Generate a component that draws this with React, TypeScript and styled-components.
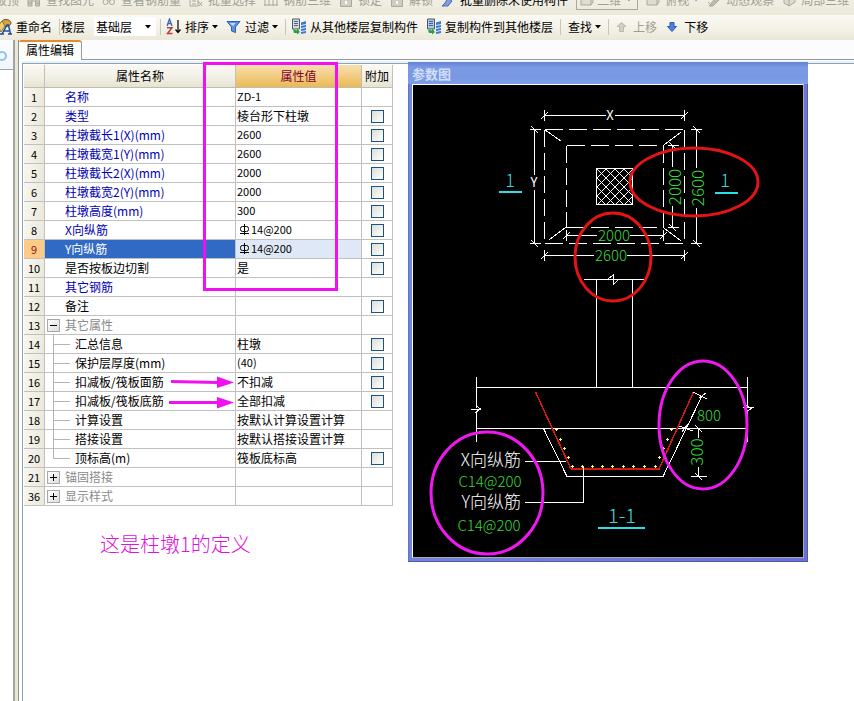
import React, { useState } from "react";
import styled, { createGlobalStyle, css } from "styled-components";

const cjk = '"Noto Sans CJK SC", "Liberation Sans", sans-serif';

const GlobalStyle = createGlobalStyle`
  * { box-sizing: border-box; }
  body { margin: 0; background: #fff; color: #000; font: 12px/18px ${cjk}; }
  button, select, input { font: inherit; color: inherit; margin: 0; }
  svg { display: block; flex: none; }
`;

const Page = styled.div`
  min-height: 100vh;
  display: flex;
  flex-direction: column;
  overflow: hidden;
`;

/* ---------- toolbars ---------- */

const ViewBar = styled.div`
  height: 15px;
  overflow: hidden;
  display: flex;
  align-items: flex-end;
  padding-bottom: 6px;
  background: linear-gradient(#f1efe4, #ebe8d9);
`;

const ViewTools = styled.div`
  display: flex;
  align-items: center;
  gap: 8px;
  height: 18px;
  margin-left: -5px;
  white-space: nowrap;
`;

const EditBar = styled.div`
  height: 25px;
  display: flex;
  align-items: center;
  margin-left: -8px;
  padding-bottom: 2px;
  white-space: nowrap;
  background: linear-gradient(#faf9f3, #f4f2e8 50%, #ebe8d9);
`;

const Tool = styled.button<{ $dim?: boolean; $flush?: boolean }>`
  display: flex;
  align-items: center;
  gap: ${(p) => (p.$flush ? 5 : 4)}px;
  flex: none;
  border: 0;
  padding: ${(p) => (p.$flush ? "0" : "0 4px")};
  background: none;
  color: ${(p) => (p.$dim ? "#a19f93" : "#000")};
`;

const ToolGroup = styled.div`
  display: flex;
  align-items: center;
  padding-left: 2px;
`;

const Separator = styled.span`
  flex: none;
  width: 1px;
  height: 16px;
  margin: 0 1px 0 3px;
  background: #c9c6b6;
`;

const FloorLabel = styled.label`
  flex: none;
  padding-right: 9px;
`;

const Combo = styled.span<{ $dim?: boolean }>`
  display: grid;
  grid-template-columns: 1fr 14px;
  align-items: center;
  flex: none;
  width: 62px;
  height: ${(p) => (p.$dim ? 20 : 19)}px;
  margin-right: ${(p) => (p.$dim ? 0 : 1)}px;
  background: ${(p) => (p.$dim ? "none" : "#fff")};
  border: ${(p) => (p.$dim ? "1px solid #aaa99c" : "0")};
  color: ${(p) => (p.$dim ? "#a19f93" : "#000")};
  select {
    grid-area: 1 / 1 / 2 / 3;
    appearance: none;
    border: 0;
    outline: 0;
    background: none;
    height: 18px;
    padding: 0 0 0 ${(p) => (p.$dim ? 20 : 2)}px;
  }
  svg { grid-area: 1 / 2; pointer-events: none; margin-left: 3px; }
  svg:nth-of-type(2) { grid-area: 1 / 1; }
`;

const Caret = () => (
  <svg width="6" height="4" viewBox="0 0 6 4"><path d="M0 0h6L3 3.4z" fill="currentColor" /></svg>
);
const ToolCaret = styled.span`
  margin-left: -1px;
`;

const dimInk = "#aaa89c";
type DimKind = "find" | "glasses" | "batch" | "bars" | "lock" | "brush" | "box" | "orbit" | "cube";
const DimIcon = ({ kind }: { kind: DimKind }) => (
  <svg width="14" height="14" viewBox="0 0 14 14" fill="none" stroke={dimInk}>
    {kind === "find" && <path d="M1 13V6h4v7zM8.500 13V6h4v7zM5 8h3M1 10h4M8 10h5" fill="#c8c6ba" />}
    {kind === "glasses" && <><circle cx="3.500" cy="9" r="2.500" /><circle cx="10" cy="9" r="2.500" /><path d="M6 8h2M2 6l2-4M12 6l-1-4" /></>}
    {kind === "batch" && <path d="M1 2v11h8V2zM3 5h4M3 8h4M3 11h4M9 8l4 5M10 13l3-4" />}
    {kind === "bars" && <path d="M1 1v12M5 1v12M9 1v12M13 1v12M0 12h14M0 4h14" />}
    {kind === "lock" && <><path d="M1.500 5.500h11v8h-11z" fill="#cfcdc1" /><path d="M4 5V1h6v4" /><path d="M7 8v3" stroke="#fff" strokeWidth="2" /></>}
    {kind === "brush" && <><path d="M12 2L7 7" stroke="#38507c" strokeWidth="2" /><path d="M7 5l4 3-4 5H1l3-3z" fill="#7f9fe0" stroke="#4668b4" /></>}
    {kind === "box" && <path d="M1 5h10v7H1zM1 5l3-4h9v8l-2 3M11 5l2-4" fill="#deddd2" />}
    {kind === "orbit" && <path d="M2 13L11 2l2 4-7 7zM1 9l4 4" fill="#bdbbb0" />}
    {kind === "cube" && <path d="M2 4l5-3 6 3v5l-6 4-5-3zM2 4l5 3 6-3M7 7v6" fill="#dddcd1" />}
  </svg>
);

const RenameIcon = () => (
  <svg width="16" height="18" viewBox="0 0 16 18">
    <ellipse cx="10" cy="5" rx="5" ry="3.500" fill="#d9a53a" stroke="#6b5424" />
    <path d="M2 8l4-5 3 5-4 6z" fill="#f1ce74" stroke="#8b713b" />
    <path d="M6 16l5-9h1.500l2 9M7 13h6M4 16h4M12 16h4" fill="none" stroke="#1f4d9c" strokeWidth="1.500" />
  </svg>
);
const SortIcon = () => (
  <svg width="15" height="17" viewBox="0 0 15 17" fill="none">
    <path d="M1 8l2.500-7L6 8M2 5.500h3" stroke="#3566b8" strokeWidth="1.300" />
    <path d="M1 9.700h5L1.500 15.500H6.500" stroke="#b6403c" strokeWidth="1.500" />
    <path d="M12 2v12M9.500 11.500L12 14.500l2.500-3" stroke="#000" strokeWidth="1.200" />
  </svg>
);
const FilterIcon = () => (
  <svg width="15" height="14" viewBox="0 0 15 14">
    <path d="M1 1.500h13L9.500 7v5.500l-4-1.500V7z" fill="#5b93e2" stroke="#2b60b5" />
    <path d="M3.500 3h6L7 6z" fill="#c4dcff" />
  </svg>
);
const CopyIcon = ({ tint }: { tint: string }) => (
  <svg width="15" height="17" viewBox="0 0 15 17">
    <path d="M1.500 1h7v10h-7z" fill={tint} stroke="#535b62" />
    <path d="M3 3.500h4M3 5.500h4M3 7.500h4" stroke="#4a648d" />
    <path d="M10 4.500l5-1.500v12l-5 1z" fill="#3d78c9" />
    <path d="M10 7.500l5-1M10 10.500l5-1M10 13.500l5-1" stroke="#d9e9ff" />
    <path d="M2 11.500l4 1v-2l3 3.500-3 2.500v-1.500H3z" fill="#29a03e" />
  </svg>
);
const MoveIcon = ({ down }: { down?: boolean }) => (
  <svg width="15" height="12" viewBox="0 0 15 12">
    {down
      ? <path d="M5 1.500h4v4h2.500L7 10.500 2.500 5.500H5z" fill="#4d82e0" stroke="#2c55b0" />
      : <path d="M5.500 10.500h4v-5H12L7.500 1.500 3 5.500h2.500z" fill="#d0cec6" stroke="#bbb9b0" />}
  </svg>
);

/* ---------- workspace ---------- */

const Workspace = styled.div`
  flex: 1;
  display: flex;
  background: #fff;
`;

const SideStrip = styled.aside`
  flex: none;
  width: 13px;
  overflow: hidden;
`;
const SideTab = styled.div`
  height: 30px;
  padding-top: 8px;
  margin-left: -8px;
  background: linear-gradient(#fbfcff, #f0f6fd);
  border-bottom: 1px solid #98a6b4;
`;
const Splitter = styled.div`
  flex: none;
  width: 6px;
  background: #e9e7da;
  border-left: 2px solid #a3a49c;
  border-right: 1px solid #8c958f;
`;

const Main = styled.main`
  flex: 1;
  min-width: 0;
  display: flex;
  flex-direction: column;
`;
const TabStrip = styled.div`
  height: 20px;
  display: flex;
  background: #fcfcfe;
  border-bottom: 1px solid #919b9c;
`;
const Tab = styled.button`
  height: 20px;
  width: 63px;
  padding: 0 0 2px;
  line-height: 16px;
  background: #fcfcf9;
  border: solid #919b9c;
  border-width: 2px 1px 0 0;
  border-top-color: #e68b2c;
  border-radius: 2px 3px 0 0;
`;
const Panel = styled.section`
  flex: 1;
  display: flex;
  align-items: flex-start;
  gap: 15px;
  margin: 3px 0 0 3px;
  padding: 1px 0 0 1px;
  border-top: 1px solid #8ba3b8;
  border-left: 1px solid #8ba3b8;
  box-shadow: 0 -2px 0 #e8f2fb;
`;

/* ---------- property grid ---------- */

const GridArea = styled.div`
  position: relative;
  flex: none;
`;
const Grid = styled.table`
  table-layout: fixed;
  width: 369px;
  border-collapse: separate;
  border-spacing: 0;
`;
const headFill = "linear-gradient(#f9f8f2, #f2f0e5 60%, #e6e3d2)";
const HeadCell = styled.th<{ $active?: boolean }>`
  height: 23px;
  padding: 0;
  font-weight: 400;
  border-right: 1px solid #c4c1b2;
  border-bottom: 1px solid #c0bdae;
  background: ${(p) => (p.$active ? "linear-gradient(#f6dfae, #f2cd83 50%, #eab955)" : headFill)};
  color: ${(p) => (p.$active ? "#800030" : "#000")};
`;
const cell = css`
  height: 19px;
  padding: 0;
  border-right: 1px solid #c0c0c0;
  border-bottom: 1px solid #c0c0c0;
`;
const NumberCell = styled.th<{ $active?: boolean }>`
  ${cell}
  font-size: 11px;
  line-height: 18px;
  font-weight: 400;
  text-align: center;
  background: ${(p) => (p.$active ? "#fbcb87" : "linear-gradient(100deg, #f8f7f1, #ebe8da)")};
  color: ${(p) => (p.$active ? "#8a1010" : "#000")};
`;
const tones = { blue: "#0000b4", black: "#000", gray: "#8a8a8a" };
type Tone = keyof typeof tones;
const NameCell = styled.td<{ $tone: Tone; $active?: boolean }>`
  ${cell}
  color: ${(p) => (p.$active ? "#fff" : tones[p.$tone])};
  background: ${(p) => (p.$active ? "#316ac5" : "#fff")};
`;
const ValueCell = styled.td<{ $active?: boolean }>`
  ${cell}
  padding-left: 1px;
  background: ${(p) => (p.$active ? "#dfe8f6" : "#fff")};
`;
const CheckCell = styled.td`
  ${cell}
`;
const CellLine = styled.div<{ $indent?: number }>`
  display: flex;
  align-items: center;
  height: 18px;
  padding-left: ${(p) => p.$indent ?? 0}px;
  white-space: nowrap;
`;
const Figure = styled.span`
  font-size: 11px;
  line-height: 16px;
  padding-bottom: 2px;
`;
const Check = styled.input`
  display: block;
  appearance: none;
  width: 13px;
  height: 13px;
  && { margin: 1px auto 0 9px; }
  border: 1px solid #1c5180;
  background: linear-gradient(135deg, #dcdcd7, #fff);
  &:checked { background: #1c5180; }
`;
const Expander = styled.button`
  width: 13px;
  height: 13px;
  && { margin: 0 5px 0 2px; }
  padding: 2px;
  border: 1px solid #a8a8a8;
  background: linear-gradient(135deg, #fff, #ddd);
  color: #000;
`;
const Branch = styled.span<{ $last?: boolean }>`
  width: 17px;
  height: 19px;
  margin: 0 5px 0 8px;
  align-self: flex-start;
  background:
    linear-gradient(#b4b4b4, #b4b4b4) 0 9px / 17px 1px no-repeat,
    linear-gradient(#b4b4b4, #b4b4b4) 0 0 / 1px ${(p) => (p.$last ? "9px" : "19px")} no-repeat;
`;
const Annotation = styled.svg`
  position: absolute;
  left: 0;
  top: 0;
  overflow: visible;
  pointer-events: none;
`;
const Note = styled.p`
  margin: 26px 0 0 76px;
  font-size: 20px;
  line-height: 24px;
  font-weight: 300;
  color: #e010e0;
`;

const Rebar = () => (
  <svg width="14" height="12" viewBox="0 0 14 12" fill="none" stroke="#000" aria-label="HRB400">
    <rect x="3.500" y="2.500" width="8" height="5" rx="2" />
    <path d="M7.500 0v11M3 9.500h9" />
  </svg>
);

interface Row {
  n: number;
  name: string;
  tone: Tone;
  value?: string;
  rebar?: boolean;
  check?: boolean;
  kind?: "child" | "last" | "open" | "closed";
}
const rows: Row[] = [
  { n: 1, name: "名称", tone: "blue", value: "ZD-1" },
  { n: 2, name: "类型", tone: "blue", value: "棱台形下柱墩", check: true },
  { n: 3, name: "柱墩截长1(X)(mm)", tone: "blue", value: "2600", check: true },
  { n: 4, name: "柱墩截宽1(Y)(mm)", tone: "blue", value: "2600", check: true },
  { n: 5, name: "柱墩截长2(X)(mm)", tone: "blue", value: "2000", check: true },
  { n: 6, name: "柱墩截宽2(Y)(mm)", tone: "blue", value: "2000", check: true },
  { n: 7, name: "柱墩高度(mm)", tone: "blue", value: "300", check: true },
  { n: 8, name: "X向纵筋", tone: "blue", value: "14@200", rebar: true, check: true },
  { n: 9, name: "Y向纵筋", tone: "blue", value: "14@200", rebar: true, check: true },
  { n: 10, name: "是否按板边切割", tone: "black", value: "是", check: true },
  { n: 11, name: "其它钢筋", tone: "blue" },
  { n: 12, name: "备注", tone: "black", check: true },
  { n: 13, name: "其它属性", tone: "gray", kind: "open" },
  { n: 14, name: "汇总信息", tone: "black", value: "柱墩", check: true, kind: "child" },
  { n: 15, name: "保护层厚度(mm)", tone: "black", value: "(40)", check: true, kind: "child" },
  { n: 16, name: "扣减板/筏板面筋", tone: "black", value: "不扣减", check: true, kind: "child" },
  { n: 17, name: "扣减板/筏板底筋", tone: "black", value: "全部扣减", check: true, kind: "child" },
  { n: 18, name: "计算设置", tone: "black", value: "按默认计算设置计算", kind: "child" },
  { n: 19, name: "搭接设置", tone: "black", value: "按默认搭接设置计算", kind: "child" },
  { n: 20, name: "顶标高(m)", tone: "black", value: "筏板底标高", check: true, kind: "last" },
  { n: 21, name: "锚固搭接", tone: "gray", kind: "closed" },
  { n: 36, name: "显示样式", tone: "gray", kind: "closed" },
];

const isFigure = (s: string) => /^[\x20-\x7e]+$/.test(s);

const Column = styled.col<{ $width: number }>`
  width: ${(p) => p.$width}px;
`;

const PropertyGrid = () => {
  const [active, setActive] = useState(9);
  return (
    <Grid>
      <colgroup>
        <Column $width={21} /><Column $width={191} /><Column $width={126} /><Column $width={31} />
      </colgroup>
      <thead>
        <tr>
          <HeadCell />
          <HeadCell>属性名称</HeadCell>
          <HeadCell $active>属性值</HeadCell>
          <HeadCell>附加</HeadCell>
        </tr>
      </thead>
      <tbody>
        {rows.map((r) => {
          const on = r.n === active;
          const group = r.kind === "open" || r.kind === "closed";
          const child = r.kind === "child" || r.kind === "last";
          return (
            <tr key={r.n} onClick={() => setActive(r.n)}>
              <NumberCell scope="row" $active={on}>{r.n}</NumberCell>
              <NameCell $tone={r.tone} $active={on}>
                <CellLine $indent={r.kind ? 0 : 20}>
                  {group && (
                    <Expander aria-label={r.name}>
                      <svg width="7" height="7" viewBox="0 0 7 7" stroke="currentColor">
                        <path d={r.kind === "open" ? "M0 3.500h7" : "M0 3.500h7M3.500 0v7"} />
                      </svg>
                    </Expander>
                  )}
                  {child && <Branch $last={r.kind === "last"} />}
                  {r.name}
                </CellLine>
              </NameCell>
              <ValueCell $active={on}>
                <CellLine>
                  {r.rebar && <Rebar />}
                  {r.value && (isFigure(r.value) ? <Figure>{r.value}</Figure> : r.value)}
                </CellLine>
              </ValueCell>
              <CheckCell>{r.check && <Check type="checkbox" aria-label={`附加 ${r.name}`} />}</CheckCell>
            </tr>
          );
        })}
      </tbody>
    </Grid>
  );
};

/* ---------- parameter window ---------- */

const Window = styled.section`
  flex: 0 1 400px;
  min-width: 0;
  margin-top: -3px;
  padding: 0 4px 4px;
  background: linear-gradient(100deg, #7189dc, #727bd8 60%, #6d70d4);
  box-shadow: inset -1px -1px 0 #5357b4, inset 1px 0 0 #6272c8;
`;
const WindowTitle = styled.h2`
  height: 22px;
  margin: 0 -4px;
  padding: 3px 4px 0;
  font-size: 13px;
  line-height: 18px;
  font-weight: 700;
  color: #d2dffa;
  background: linear-gradient(#6580d4, #7b9ae4 25%, #7997e2 70%, #7da0ea);
`;
const Canvas = styled.div`
  border: 1px solid;
  border-color: #fff #a9a8b4 #a9a8b4 #fff;
  background: #000;
  svg { width: 100%; height: auto; }
`;
const DrawingText = styled.text<{ $size: number; $light?: boolean }>`
  font-family: ${cjk};
  font-size: ${(p) => p.$size}px;
  font-weight: ${(p) => (p.$light ? 300 : 400)};
  stroke: none;
`;

const dots = [
  [556, 429], [560, 439], [564, 448], [568, 457],
  [572, 466], [582, 466], [592, 466], [602, 466], [612, 466], [623, 466], [633, 466], [644, 466], [655, 466],
  [659, 457], [663, 448], [667, 439], [671, 429],
];

/* Plan view on top, section 1-1 of the pier base below it. */
const PierDrawing = () => (
  <svg viewBox="413 85 390 472" fill="none" stroke="#fff" shapeRendering="crispEdges">
    <defs>
      <pattern id="hatch" width="9" height="9" patternUnits="userSpaceOnUse" x="597" y="169">
        <path d="M0 0l9 9M9 0L0 9" stroke="#fff" strokeWidth="1.200" />
      </pattern>
    </defs>

    <path d="M544.500 115.500H606M615 115.500H684.500M544.500 110v11M684.500 110v11M541 119l7-7M681 119l7-7" />
    <path d="M534.500 129.500V175M534.500 190V243.500M530 129.500h11M530 243.500h11M531 126l7 7M531 240l7 7" />
    <path d="M544.500 129.500H684.500M544.500 243.500H684.500" strokeDasharray="18 6" />
    <path d="M544.500 129.500V243.500M684.500 129.500V243.500" strokeDasharray="17 6" />
    <path d="M566.500 145.500H663.500M566.500 227.500H663.500" strokeDasharray="18 6" />
    <path d="M566.500 145.500V227.500M663.500 145.500V227.500" strokeDasharray="17 5" />
    <path d="M545 130l16 11M549 240l17-13M664 145l17-13M664 228l17 13" />
    <rect x="596.500" y="168.500" width="36" height="36" fill="url(#hatch)" />

    <path d="M672.500 145.500V167M672.500 206V227.500M668 145.500h11M668 227.500h11M669 142l7 7M669 224l7 7" />
    <path d="M696.500 129.500V168M696.500 208V243.500M691 129.500h11M691 243.500h11M693 126l7 7M693 240l7 7" />
    <path d="M566.500 235.500H597M630 235.500H663.500M566.500 230v11M663.500 230v11M563 239l7-7M660 239l7-7" />
    <path d="M544.500 255.500H594M627 255.500H684.500M544.500 250v11M684.500 250v11M541 259l7-7M681 259l7-7" />

    <path d="M584 279.500h60M608 279l5-4v10l6-6M596.500 279.500V387M632.500 279.500V387" />

    <path d="M476.500 387.500H747.500M476.500 428.500H747.500" />
    <path d="M476.500 377V408M476.500 411V442M471 409.500h9l-5 3M476 406l5 3" />
    <path d="M747.500 377V406M747.500 410V442M743 407.500h10l-5 3M744 404l5 3" />
    <path d="M543.500 428.500L567 476.500H663L702 396" />
    <g stroke="#d81818" strokeWidth="1.500">
      <path d="M535.500 392L571 469M659 469L693.500 392" />
      <path d="M571 469H660" strokeWidth="2" />
    </g>
    <path d="M525 461.500H566M525 502.500H583.500V467" />
    <path d="M693 392l14 7M699 398l7-5M679 426l14 5M682 432l6-8" />
    <path d="M698.500 428.500V438M698.500 467V476.500M691 476.500h16M695 425l7 7M695 473l7 7" />
    <g stroke="#ffff60">
      {dots.map(([x, y]) => <path key={`${x}-${y}`} d={`M${x - 1} ${y + 0.5}h3M${x + 0.5} ${y - 1}v3`} />)}
    </g>
    <g stroke="#28e0e8" strokeWidth="2">
      <path d="M499 192H522M715 193H738M598 528H645" />
    </g>

    <g fill="#fff">
      <DrawingText $size={13} x="610" y="120" textAnchor="middle">X</DrawingText>
      <DrawingText $size={13} x="534" y="187" textAnchor="middle">Y</DrawingText>
      <DrawingText $size={17} $light x="521" y="466" textAnchor="end">X向纵筋</DrawingText>
      <DrawingText $size={17} $light x="521" y="508" textAnchor="end">Y向纵筋</DrawingText>
    </g>
    <g fill="#38dc38">
      <DrawingText $size={15} $light x="614" y="241" textAnchor="middle">2000</DrawingText>
      <DrawingText $size={15} $light x="611" y="261" textAnchor="middle">2600</DrawingText>
      <DrawingText $size={17} $light textAnchor="middle" transform="translate(681 187) rotate(-90)">2000</DrawingText>
      <DrawingText $size={17} $light textAnchor="middle" transform="translate(704 188) rotate(-90)">2600</DrawingText>
      <DrawingText $size={15} $light x="709" y="421" textAnchor="middle">800</DrawingText>
      <DrawingText $size={17} $light textAnchor="middle" transform="translate(703 452) rotate(-90)">300</DrawingText>
      <DrawingText $size={15} $light x="490" y="487" textAnchor="middle">C14@200</DrawingText>
      <DrawingText $size={15} $light x="489" y="531" textAnchor="middle">C14@200</DrawingText>
    </g>
    <g fill="#40d8dc">
      <DrawingText $size={18} $light x="510" y="187" textAnchor="middle">1</DrawingText>
      <DrawingText $size={18} $light x="725" y="187" textAnchor="middle">1</DrawingText>
      <DrawingText $size={20} $light x="622" y="523" textAnchor="middle">1-1</DrawingText>
    </g>

    <g strokeWidth="3" shapeRendering="auto">
      <ellipse cx="694" cy="182" rx="64" ry="34" stroke="#e41414" />
      <ellipse cx="613" cy="257" rx="38" ry="44" stroke="#e41414" />
      <ellipse cx="487" cy="493" rx="56" ry="61" stroke="#f018f0" />
      <ellipse cx="703" cy="425" rx="44" ry="64" stroke="#f018f0" />
    </g>
  </svg>
);

export default function App() {
  return (
    <Page>
      <GlobalStyle />
      <ViewBar>
        <ViewTools>
          <Tool $dim $flush>板顶</Tool>
          <Tool $dim $flush><DimIcon kind="find" />查找图元</Tool>
          <Tool $dim $flush><DimIcon kind="glasses" />查看钢筋量</Tool>
          <Tool $dim $flush><DimIcon kind="batch" />批量选择</Tool>
          <Tool $dim $flush><DimIcon kind="bars" />钢筋三维</Tool>
          <Tool $dim $flush><DimIcon kind="lock" />锁定</Tool>
          <Tool $dim $flush><DimIcon kind="lock" />解锁</Tool>
          <Tool $flush><DimIcon kind="brush" />批量删除未使用构件</Tool>
          <Combo $dim>
            <select aria-label="视图"><option>二维</option></select>
            <Caret />
            <DimIcon kind="box" />
          </Combo>
          <Tool $dim $flush><DimIcon kind="box" />俯视<ToolCaret><Caret /></ToolCaret></Tool>
          <Tool $dim $flush><DimIcon kind="orbit" />动态观察</Tool>
          <Tool $dim $flush><DimIcon kind="cube" />局部三维</Tool>
        </ViewTools>
      </ViewBar>
      <EditBar>
        <Tool><RenameIcon />重命名</Tool>
        <Separator />
        <FloorLabel htmlFor="floor">楼层</FloorLabel>
        <Combo>
          <select id="floor"><option>基础层</option></select>
          <Caret />
        </Combo>
        <Separator />
        <Tool><SortIcon />排序<ToolCaret><Caret /></ToolCaret></Tool>
        <Tool><FilterIcon />过滤<ToolCaret><Caret /></ToolCaret></Tool>
        <Separator />
        <Tool><CopyIcon tint="#d5d9dc" />从其他楼层复制构件</Tool>
        <Tool><CopyIcon tint="#a8c6f0" />复制构件到其他楼层</Tool>
        <Separator />
        <ToolGroup>
          <Tool>查找<ToolCaret><Caret /></ToolCaret></Tool>
          <Separator />
          <Tool $dim disabled><MoveIcon />上移</Tool>
          <Tool><MoveIcon down />下移</Tool>
        </ToolGroup>
      </EditBar>
      <Workspace>
        <SideStrip>
          <SideTab>
            <svg width="16" height="16" viewBox="0 0 16 16"><circle cx="10" cy="8" r="4" fill="none" stroke="#8cc4ee" strokeWidth="2" /></svg>
          </SideTab>
        </SideStrip>
        <Splitter />
        <Main>
          <TabStrip><Tab>属性编辑</Tab></TabStrip>
          <Panel>
            <GridArea>
              <PropertyGrid />
              <Annotation width="369" height="441" viewBox="24 65 369 441" fill="none" stroke="#f010f0" strokeWidth="3">
                <rect x="204.500" y="63.500" width="132" height="226" />
                <path d="M171 381.500L218 382.500M169 402.500H218" />
                <path d="M217 376.500L234 382.500L217 388zM217 397L234 402.500L217 408.500z" fill="#f010f0" stroke="none" />
              </Annotation>
              <Note>这是柱墩1的定义</Note>
            </GridArea>
            <Window>
              <WindowTitle>参数图</WindowTitle>
              <Canvas><PierDrawing /></Canvas>
            </Window>
          </Panel>
        </Main>
      </Workspace>
    </Page>
  );
}
